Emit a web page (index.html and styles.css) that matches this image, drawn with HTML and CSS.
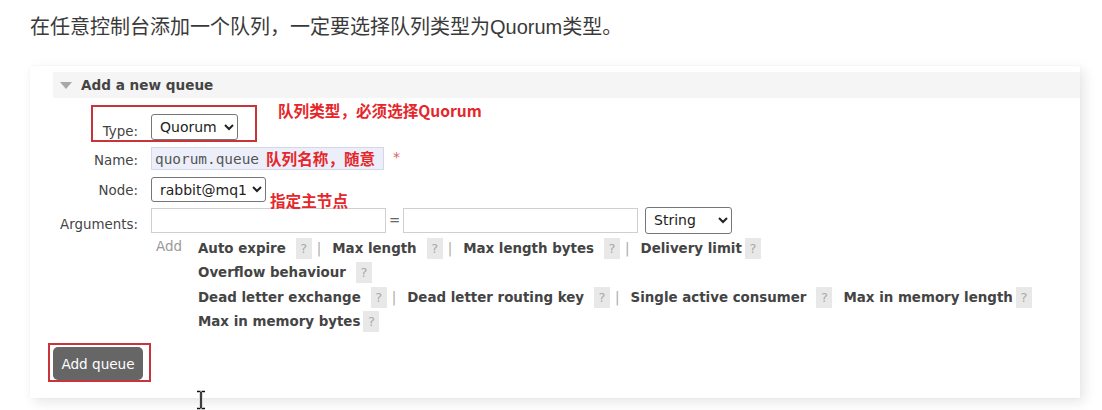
FILE: index.html
```html
<!doctype html>
<html>
<head>
  <meta charset="utf-8">
  <title>Add a new queue</title>
  <link rel="stylesheet" href="styles.css">
</head>
<body>
  <p class="intro">在任意控制台添加一个队列，一定要选择队列类型为Quorum类型。</p>

  <div class="shot">
    <div class="section-head"><span class="tri"></span>Add a new queue</div>

    <div class="form">
      <div class="row row-type">
        <label class="lbl">Type:</label>
        <select class="sel sel-type"><option>Quorum</option></select>
      </div>
      <div class="row row-name">
        <label class="lbl">Name:</label>
        <input class="txt txt-name" type="text" value="quorum.queue">
        <span class="req">*</span>
      </div>
      <div class="row row-node">
        <label class="lbl">Node:</label>
        <select class="sel sel-node"><option>rabbit@mq1</option></select>
      </div>
      <div class="row row-args">
        <label class="lbl">Arguments:</label>
        <input class="txt txt-arg" type="text">
        <span class="eq">=</span>
        <input class="txt txt-arg" type="text">
        <select class="sel sel-str"><option>String</option></select>
      </div>
      <div class="row row-add">
        <span class="add">Add</span>
        <div class="keys">
          <div class="key-line">
            <span class="arg">Auto expire</span><span class="help">?</span><span class="sep">|</span>
            <span class="arg">Max length</span><span class="help">?</span><span class="sep">|</span>
            <span class="arg">Max length bytes</span><span class="help">?</span><span class="sep">|</span>
            <span class="arg">Delivery limit</span><span class="help tight">?</span>
          </div>
          <div class="key-line">
            <span class="arg">Overflow behaviour</span><span class="help">?</span>
          </div>
          <div class="key-line">
            <span class="arg">Dead letter exchange</span><span class="help">?</span><span class="sep">|</span>
            <span class="arg">Dead letter routing key</span><span class="help">?</span><span class="sep">|</span>
            <span class="arg">Single active consumer</span><span class="help">?</span>
            <span class="arg next">Max in memory length</span><span class="help tight">?</span>
          </div>
          <div class="key-line">
            <span class="arg">Max in memory bytes</span><span class="help tight">?</span>
          </div>
        </div>
      </div>
    </div>

    <button class="btn">Add queue</button>

    <!-- annotations drawn over the screenshot -->
    <div class="mark mark-type"></div>
    <div class="mark mark-btn"></div>
    <span class="note note-type">队列类型，必须选择Quorum</span>
    <span class="note note-name">队列名称，随意</span>
    <span class="note note-node">指定主节点</span>
  </div>

  <svg class="cursor" width="12" height="20" viewBox="0 0 12 20">
    <path d="M2 1.5h3.5M6.5 1.5H10M6 2v16M2 18.5h3.5M6.5 18.5H10" stroke="#111" stroke-width="1.6" fill="none"/>
    <path d="M4.5 2.5v15M7.5 2.5v15" stroke="#ddd" stroke-width="1" fill="none"/>
  </svg>
</body>
</html>
```

FILE: styles.css
```css
html {
  background: #fff;
}
body {
  margin: 0;
  font-family: "DejaVu Sans", Verdana, sans-serif;
  color: #444;
  position: relative;
  height: 410px;
  overflow: hidden;
}

.intro {
  margin: 0;
  padding: 12px 0 0 30px;
  height: 30px;
  line-height: 30px;
  font-family: "Liberation Sans", "Noto Sans CJK SC", sans-serif;
  font-size: 20px;
  color: #3a3a3a;
}

.shot {
  position: relative;
  margin: 24px 0 0 30px;
  width: 1050px;
  padding: 6px 0 18px 0;
  background: #fff;
  box-shadow: 4px 4px 12px rgba(0, 0, 0, 0.10), 0 0 2px rgba(0, 0, 0, 0.04);
}

.section-head {
  margin-left: 23px;
  height: 26px;
  line-height: 26px;
  background: #f5f5f5;
  font-weight: bold;
  font-size: 13.6px;
  color: #444;
  display: flex;
  align-items: center;
}
.tri {
  width: 0;
  height: 0;
  margin: 0 9px 0 7px;
  border-left: 6px solid transparent;
  border-right: 6px solid transparent;
  border-top: 7px solid #a8a8a8;
}

.form {
  padding-left: 23px;
  font-size: 13.4px;
}
.row {
  display: flex;
  align-items: center;
}
.lbl {
  width: 85px;
  margin-right: 13px;
  text-align: right;
  color: #444;
}
.row-type {
  margin-top: 16px;
  height: 26px;
}
.row-type .lbl {
  padding-top: 8px;
}
.row-name {
  margin-top: 7px;
  height: 23px;
}
.row-name .lbl {
  padding-top: 3px;
}
.row-node {
  margin-top: 7px;
  height: 25px;
}
.row-node .lbl {
  padding-top: 2px;
}
.row-args {
  margin-top: 5px;
  height: 26px;
}
.row-args .lbl {
  padding-top: 8px;
}

.sel {
  font-family: "DejaVu Sans", Verdana, sans-serif;
  font-size: 14px;
  color: #222;
  background: #fff;
  border: 1px solid #767676;
  border-radius: 3px;
  padding: 0 2px 0 4px;
}
.sel-type {
  width: 87px;
  height: 26px;
}
.sel-node {
  width: 115px;
  height: 25px;
}
.sel-str {
  width: 87px;
  height: 27px;
  margin-left: 7px;
}

.txt {
  box-sizing: border-box;
  border: 1px solid #cfcfcf;
  background: #fff;
  margin: 0;
}
.txt-name {
  width: 233px;
  height: 23px;
  background: #eceffa;
  border-color: #d4d7e8;
  font-family: "DejaVu Sans Mono", monospace;
  font-size: 14.4px;
  color: #555;
  padding: 0 3px;
}
.req {
  color: #e06060;
  margin-left: 9px;
  font-size: 14px;
  position: relative;
  top: -2px;
}
.txt-arg {
  width: 235px;
  height: 25px;
}
.eq {
  width: 17px;
  text-align: center;
  color: #666;
}

.row-add {
  margin-top: 3px;
  align-items: flex-start;
}
.add {
  width: 42px;
  margin-left: 103px;
  color: #999;
  line-height: 22px;
}
.keys {
  display: flex;
  flex-direction: column;
}
.key-line {
  display: flex;
  align-items: center;
  height: 24.5px;
}
.arg {
  font-weight: bold;
  color: #444;
  white-space: nowrap;
}
.help {
  display: inline-block;
  width: 16px;
  height: 21px;
  line-height: 21px;
  margin-left: 10px;
  text-align: center;
  background: #e8e8e8;
  color: #aaa;
  font-size: 13px;
}
.help.tight {
  margin-left: 3px;
}
.sep {
  margin: 0 11px 0 5px;
  color: #aaa;
}
.arg.next {
  margin-left: 11px;
}

.btn {
  display: block;
  margin: 13px 0 0 23px;
  width: 90px;
  height: 33px;
  border: 0;
  border-radius: 5px;
  background: #666;
  color: #fff;
  font-family: "DejaVu Sans", Verdana, sans-serif;
  font-size: 13.6px;
  padding: 0;
}

.mark {
  position: absolute;
  box-sizing: border-box;
  border: 2px solid #c7343c;
}
.mark-type {
  left: 61px;
  top: 39px;
  width: 166px;
  height: 37px;
}
.mark-btn {
  left: 18px;
  top: 277px;
  width: 103px;
  height: 39px;
}

.note {
  position: absolute;
  font-family: "Noto Sans CJK SC", sans-serif;
  font-weight: bold;
  font-size: 15.6px;
  line-height: 20px;
  color: #e5272b;
  white-space: nowrap;
}
.note-type {
  left: 248px;
  top: 34px;
}
.note-name {
  left: 236px;
  top: 82px;
}
.note-node {
  left: 240px;
  top: 124px;
}

.cursor {
  position: absolute;
  left: 195px;
  top: 390px;
}
```
